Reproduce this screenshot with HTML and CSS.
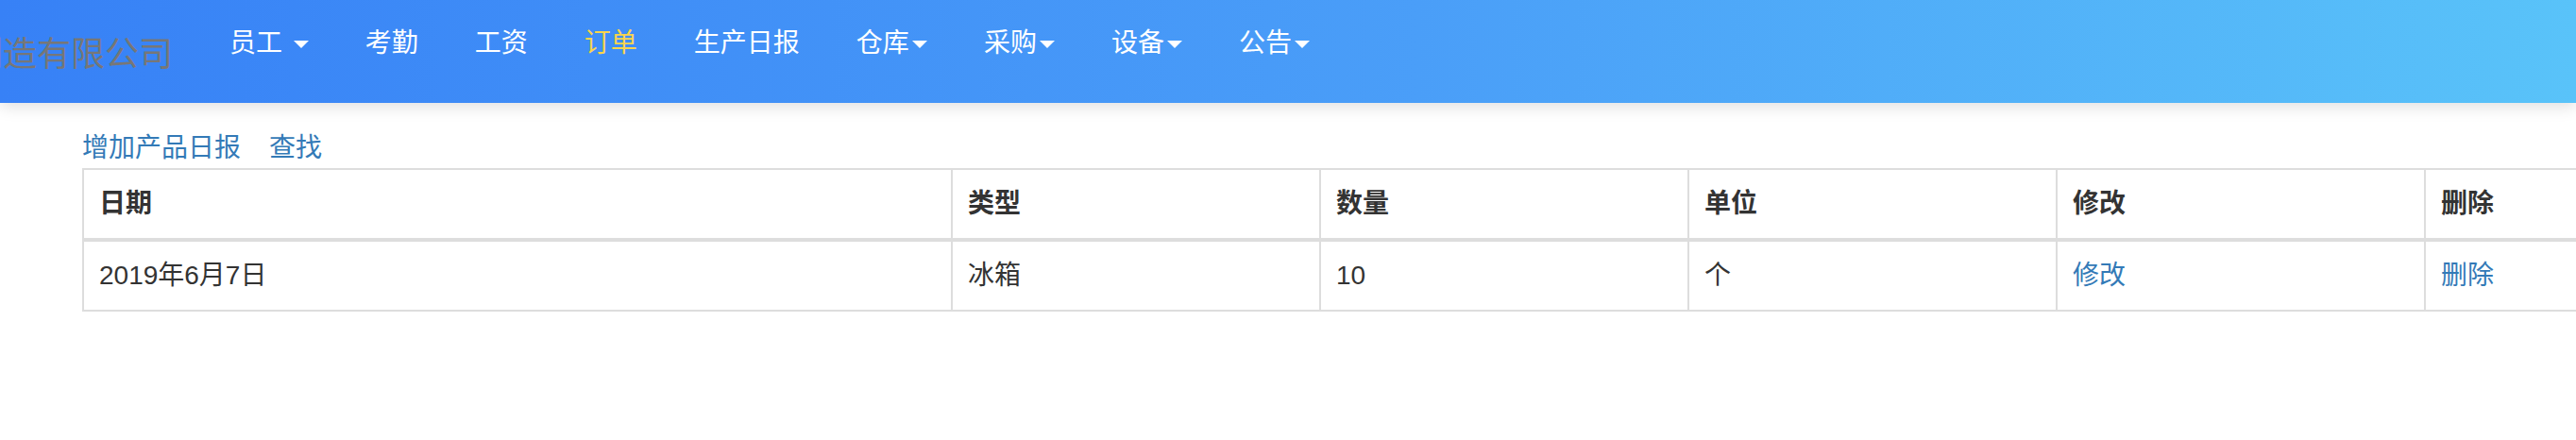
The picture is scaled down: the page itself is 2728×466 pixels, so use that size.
FILE: index.html
```html
<!DOCTYPE html>
<html lang="zh-CN">
<head>
<meta charset="utf-8">
<title>生产日报</title>
<link rel="stylesheet" href="styles.css">
</head>
<body>
<header class="navbar">
  <div class="brand">智能制造有限公司</div>
  <nav class="nav">
    <a class="nav-link" href="#">员工 <span class="caret caret-spaced"></span></a>
    <a class="nav-link" href="#">考勤</a>
    <a class="nav-link" href="#">工资</a>
    <a class="nav-link nav-active" href="#">订单</a>
    <a class="nav-link" href="#">生产日报</a>
    <a class="nav-link" href="#">仓库<span class="caret"></span></a>
    <a class="nav-link" href="#">采购<span class="caret"></span></a>
    <a class="nav-link" href="#">设备<span class="caret"></span></a>
    <a class="nav-link" href="#">公告<span class="caret"></span></a>
  </nav>
</header>
<main class="content">
  <div class="toolbar">
    <a class="link" href="#">增加产品日报</a>
    <a class="link" href="#">查找</a>
  </div>
  <table class="grid">
    <colgroup>
      <col class="c-date">
      <col class="c-std">
      <col class="c-std">
      <col class="c-std">
      <col class="c-std">
      <col class="c-std">
    </colgroup>
    <thead>
      <tr>
        <th>日期</th>
        <th>类型</th>
        <th>数量</th>
        <th>单位</th>
        <th>修改</th>
        <th>删除</th>
      </tr>
    </thead>
    <tbody>
      <tr>
        <td>2019年6月7日</td>
        <td>冰箱</td>
        <td>10</td>
        <td>个</td>
        <td><a class="link" href="#">修改</a></td>
        <td><a class="link" href="#">删除</a></td>
      </tr>
    </tbody>
  </table>
</main>
</body>
</html>
```
FILE: styles.css
```css
html, body {
  margin: 0;
  padding: 0;
  overflow-x: hidden;
  background: #fff;
}
body {
  font-family: "Liberation Sans", "Noto Sans CJK SC", sans-serif;
  font-size: 28px;
  line-height: 40px;
  color: #333;
}
a {
  text-decoration: none;
}
.navbar {
  position: relative;
  z-index: 2;
  height: 109px;
  display: flex;
  align-items: flex-start;
  background: linear-gradient(to right, #3781f6 0%, #4a9ef8 55%, #59c3f9 100%);
  box-shadow: 0 4px 16px rgba(0, 0, 0, 0.13);
}
.brand {
  margin-left: -105px;
  padding: 38px 30px 0 0;
  font-size: 36px;
  line-height: 40px;
  color: #777;
  white-space: nowrap;
}
.nav {
  display: flex;
  padding-top: 26px;
}
.nav-link {
  display: flex;
  align-items: center;
  padding: 0 30px;
  color: #fff;
  line-height: 40px;
  white-space: pre;
}
.nav-active {
  color: #fad54c;
}
.caret {
  display: inline-block;
  width: 0;
  height: 0;
  margin-left: 3px;
  margin-top: 2px;
  border-top: 8px solid #fff;
  border-left: 8px solid transparent;
  border-right: 8px solid transparent;
}
.caret-spaced {
  margin-left: 4px;
}
.content {
  padding: 28px 0 0 87px;
}
.toolbar {
  display: flex;
  gap: 30px;
  height: 41px;
}
.link {
  color: #337ab7;
}
.grid {
  border-collapse: collapse;
  table-layout: fixed;
  width: 2870px;
  border: 2px solid #ddd;
}
.c-date {
  width: 920px;
}
.c-std {
  width: 390px;
}
.grid th,
.grid td {
  padding: 16px 16px;
  text-align: left;
  border: 2px solid #ddd;
  line-height: 40px;
  white-space: nowrap;
}
.grid th {
  font-weight: bold;
  border-bottom: 4px solid #ddd;
}
```
